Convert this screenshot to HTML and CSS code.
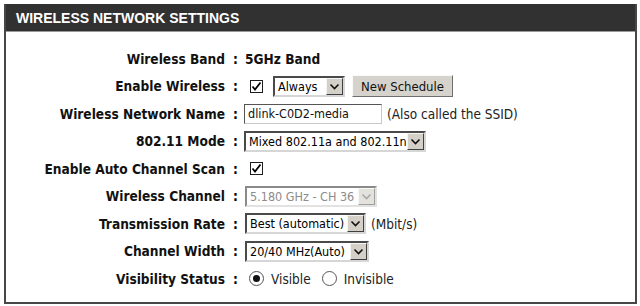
FILE: index.html
```html
<!DOCTYPE html>
<html lang="en">
  <head>
    <meta charset="UTF-8" />
    <title>Wireless Network Settings</title>
    <link rel="stylesheet" href="styles.css">
  </head>
  <body>
    <div class="box">
      <h2 class="box-title">WIRELESS NETWORK SETTINGS</h2>
      <div class="rows">
        <div class="row">
          <span class="label">Wireless Band</span><span class="colon">:</span>
          <span class="value"><b>5GHz Band</b></span>
        </div>

        <div class="row">
          <span class="label">Enable Wireless</span><span class="colon">:</span>
          <span class="value">
            <span class="check"><svg viewBox="0 0 13 13" width="13" height="13"><path d="M2.5 6.5 L5 9.5 L10.5 2.5" fill="none" stroke="#000" stroke-width="1.8"/></svg></span>
            <span class="select sel-always"><span class="select-text">Always</span><span class="select-btn"><svg viewBox="0 0 11 7" width="11" height="7"><path d="M1.5 1.5 L5.5 5.5 L9.5 1.5" fill="none" stroke="#111" stroke-width="1.6"/></svg></span></span>
            <button class="btn" type="button">New Schedule</button>
          </span>
        </div>

        <div class="row">
          <span class="label">Wireless Network Name</span><span class="colon">:</span>
          <span class="value">
            <input class="text" type="text" value="dlink-C0D2-media" />
            <span class="note">(Also called the SSID)</span>
          </span>
        </div>

        <div class="row">
          <span class="label">802.11 Mode</span><span class="colon">:</span>
          <span class="value">
            <span class="select sel-mode"><span class="select-text">Mixed 802.11a and 802.11n</span><span class="select-btn"><svg viewBox="0 0 11 7" width="11" height="7"><path d="M1.5 1.5 L5.5 5.5 L9.5 1.5" fill="none" stroke="#111" stroke-width="1.6"/></svg></span></span>
          </span>
        </div>

        <div class="row">
          <span class="label">Enable Auto Channel Scan</span><span class="colon">:</span>
          <span class="value">
            <span class="check"><svg viewBox="0 0 13 13" width="13" height="13"><path d="M2.5 6.5 L5 9.5 L10.5 2.5" fill="none" stroke="#000" stroke-width="1.8"/></svg></span>
          </span>
        </div>

        <div class="row">
          <span class="label">Wireless Channel</span><span class="colon">:</span>
          <span class="value">
            <span class="select sel-channel disabled"><span class="select-text">5.180 GHz - CH 36</span><span class="select-btn"><svg viewBox="0 0 11 7" width="11" height="7"><path d="M1.5 1.5 L5.5 5.5 L9.5 1.5" fill="none" stroke="#a8a8a8" stroke-width="1.6"/></svg></span></span>
          </span>
        </div>

        <div class="row">
          <span class="label">Transmission Rate</span><span class="colon">:</span>
          <span class="value">
            <span class="select sel-rate"><span class="select-text">Best (automatic)</span><span class="select-btn"><svg viewBox="0 0 11 7" width="11" height="7"><path d="M1.5 1.5 L5.5 5.5 L9.5 1.5" fill="none" stroke="#111" stroke-width="1.6"/></svg></span></span>
            <span class="note">(Mbit/s)</span>
          </span>
        </div>

        <div class="row">
          <span class="label">Channel Width</span><span class="colon">:</span>
          <span class="value">
            <span class="select sel-width"><span class="select-text">20/40 MHz(Auto)</span><span class="select-btn"><svg viewBox="0 0 11 7" width="11" height="7"><path d="M1.5 1.5 L5.5 5.5 L9.5 1.5" fill="none" stroke="#111" stroke-width="1.6"/></svg></span></span>
          </span>
        </div>

        <div class="row">
          <span class="label">Visibility Status</span><span class="colon">:</span>
          <span class="value">
            <span class="radio on"></span><span class="radio-text">Visible</span>
            <span class="radio"></span><span class="radio-text">Invisible</span>
          </span>
        </div>
      </div>
    </div>
  </body>
</html>
```

FILE: styles.css
```css
body {
  margin: 0;
  padding: 4px 3px 2px 4px;
  background: #fff;
  font-family: "DejaVu Sans Condensed", "DejaVu Sans", sans-serif;
  font-stretch: semi-condensed;
  color: #000;
}
.box {
  height: 300px;
  box-sizing: border-box;
  border: 2px solid #474747;
  border-top: none;
}
.box-title {
  margin: 0;
  height: 28px;
  box-sizing: border-box;
  padding: 5px 0 0 10px;
  background: #313131;
  border-bottom: 1px solid #9a9a9a;
  color: #fff;
  font-family: "Liberation Sans", Arial, sans-serif;
  font-size: 14px;
  font-weight: bold;
  line-height: 18px;
}
.rows {
  padding-top: 13px;
}
.row {
  display: grid;
  grid-template-columns: 219px 20px 1fr;
  align-items: center;
  height: 27.5px;
}
.label {
  text-align: right;
  font-weight: bold;
  font-size: 13.6px;
  color: #111;
}
.colon {
  font-weight: bold;
  font-size: 13.6px;
  padding-left: 8px;
}
.value {
  display: flex;
  align-items: center;
  font-size: 13.5px;
}
.value b {
  font-size: 13.6px;
  color: #111;
}
.check {
  display: inline-flex;
  width: 13px;
  height: 13px;
  box-sizing: border-box;
  border: 1px solid #1c1c1c;
  background: #fff;
  margin-left: 5px;
}
.check svg {
  margin: -1px;
}
.select {
  display: inline-flex;
  align-items: stretch;
  height: 21px;
  box-sizing: border-box;
  border: 2px solid;
  border-color: #4a4a4a #d6d6d6 #d6d6d6 #4a4a4a;
  background: #fff;
  font-size: 12.5px;
}
.select-text {
  flex: 1;
  padding-left: 3px;
  line-height: 17px;
  white-space: nowrap;
  overflow: hidden;
}
.select-btn {
  width: 17px;
  box-sizing: border-box;
  display: flex;
  align-items: center;
  justify-content: center;
  background: #d4d0c8;
  border: 1px solid;
  border-color: #f4f4f4 #404040 #404040 #f4f4f4;
}
.sel-always {
  width: 72px;
  margin-left: 10px;
}
.sel-mode {
  width: 182px;
  margin-left: -1px;
}
.sel-channel {
  width: 132px;
}
.sel-rate {
  width: 121px;
}
.sel-width {
  width: 124px;
}
.disabled {
  border-color: #8a8a8a #e2e2e2 #e2e2e2 #8a8a8a;
}
.disabled .select-text {
  color: #8c8c8c;
}
.disabled .select-btn {
  background: #e4e2dc;
  border-color: #f8f8f8 #a0a0a0 #a0a0a0 #f8f8f8;
}
.btn {
  margin-left: 7px;
  height: 22px;
  width: 101px;
  padding: 0;
  background: #d6d3cd;
  border: 1px solid;
  border-color: #fafafa #6e6e6e #6e6e6e #fafafa;
  font-family: inherit;
  font-stretch: inherit;
  font-size: 13px;
  color: #111;
}
.text {
  margin-left: -1px;
  width: 138px;
  height: 20px;
  box-sizing: border-box;
  border: 1px solid #7a7a7a;
  border-color: #555 #c8c8c8 #c8c8c8 #555;
  padding: 0 3px;
  font-family: inherit;
  font-stretch: inherit;
  font-size: 12.5px;
  color: #111;
}
.note {
  margin-left: 5px;
  font-size: 13.5px;
  color: #222;
}
.radio {
  width: 15px;
  height: 15px;
  box-sizing: border-box;
  border: 1px solid #555;
  border-radius: 50%;
  background: #fff;
  margin-left: 4px;
  display: inline-flex;
  align-items: center;
  justify-content: center;
}
.radio.on::after {
  content: "";
  width: 7px;
  height: 7px;
  border-radius: 50%;
  background: #111;
}
.radio-text {
  margin-left: 7px;
  margin-right: 7px;
  font-size: 13.5px;
  color: #222;
}
```
